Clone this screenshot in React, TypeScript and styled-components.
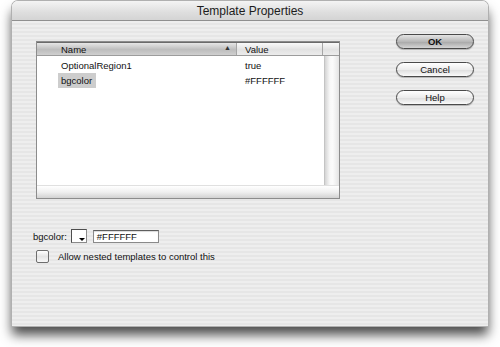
import React from 'react';
import styled, { createGlobalStyle } from 'styled-components';

const GlobalStyle = createGlobalStyle`
  html, body {
    margin: 0;
    padding: 0;
    background: #ffffff;
  }
  body {
    font-family: "Liberation Sans", Arial, sans-serif;
    color: #111;
  }
`;

function App() {
  return (
    <Page>
      <GlobalStyle />
      <Window>
        <TitleBar>Template Properties</TitleBar>
        <Content>
          <LeftColumn>
            <Table>
              <HeaderRow>
                <HeaderCell width={200} sorted indent={24}>
                  Name
                  <SortArrow>▲</SortArrow>
                </HeaderCell>
                <HeaderCell width={86} indent={8}>Value</HeaderCell>
                <HeaderCorner />
              </HeaderRow>
              <TableBody>
                <RowList>
                  <Row>
                    <Cell width={200} indent={24}>OptionalRegion1</Cell>
                    <Cell width={87} indent={8}>true</Cell>
                  </Row>
                  <Row>
                    <Cell width={200} indent={24}>
                      <Selected>bgcolor</Selected>
                    </Cell>
                    <Cell width={87} indent={8}>#FFFFFF</Cell>
                  </Row>
                </RowList>
                <VerticalTrack />
              </TableBody>
              <HorizontalTrack />
            </Table>

            <FieldRow>
              <FieldLabel>bgcolor:</FieldLabel>
              <Swatch>
                <SwatchArrow />
              </Swatch>
              <TextField>#FFFFFF</TextField>
            </FieldRow>

            <CheckRow>
              <CheckBox />
              <CheckLabel>Allow nested templates to control this</CheckLabel>
            </CheckRow>
          </LeftColumn>

          <ButtonColumn>
            <PillButton primary>OK</PillButton>
            <PillButton>Cancel</PillButton>
            <PillButton>Help</PillButton>
          </ButtonColumn>
        </Content>
      </Window>
    </Page>
  );
}

export default App;

const Page = styled.div`
  width: 500px;
  height: 347px;
  overflow: hidden;
  padding-top: 1px;
  box-sizing: border-box;
`;

const Window = styled.div`
  margin-left: 12px;
  width: 476px;
  height: 325px;
  border-radius: 6px 6px 0 0;
  background: repeating-linear-gradient(
    to bottom,
    #eeeeee 0px,
    #eeeeee 2px,
    #e6e6e6 2px,
    #e6e6e6 4px
  );
  box-shadow: 0 0 0 1px #b0b0b0, 0 9px 12px rgba(0, 0, 0, 0.7);
  display: flex;
  flex-direction: column;
`;

const TitleBar = styled.div`
  height: 18px;
  border-bottom: 1px solid #8f8f8f;
  border-radius: 6px 6px 0 0;
  background: linear-gradient(to bottom, #f4f4f4, #dedede 60%, #d4d4d4);
  display: flex;
  align-items: center;
  justify-content: center;
  font-size: 12px;
  color: #1c1c1c;
  padding-top: 1px;
`;

const Content = styled.div`
  display: flex;
  flex-direction: row;
`;

const LeftColumn = styled.div`
  padding: 20px 0 0 24px;
  display: flex;
  flex-direction: column;
`;

const Table = styled.div`
  width: 302px;
  height: 156px;
  border: 1px solid #8c8c8c;
  background: #ffffff;
  display: flex;
  flex-direction: column;
`;

const HeaderRow = styled.div`
  height: 12px;
  display: flex;
  border-bottom: 1px solid #9c9c9c;
  border-top: 1px solid #6a6a6a;
  font-size: 9.5px;
`;

const HeaderCell = styled.div<{ width: number; sorted?: boolean; indent: number }>`
  width: ${(p) => p.width}px;
  padding-left: ${(p) => p.indent}px;
  box-sizing: border-box;
  border-right: 1px solid #a6a6a6;
  display: flex;
  align-items: center;
  position: relative;
  color: #111;
  background: ${(p) =>
    p.sorted
      ? 'linear-gradient(to bottom, #e6e6e6, #bdbdbd 55%, #cfcfcf)'
      : 'linear-gradient(to bottom, #fafafa, #e2e2e2 55%, #ececec)'};
`;

const SortArrow = styled.span`
  position: absolute;
  right: 5px;
  top: 1px;
  font-size: 7px;
  color: #333;
`;

const HeaderCorner = styled.div`
  flex: 1;
  background: linear-gradient(to bottom, #fafafa, #e2e2e2 55%, #ececec);
`;

const TableBody = styled.div`
  height: 129px;
  display: flex;
`;

const RowList = styled.div`
  width: 287px;
  padding-top: 2px;
  display: flex;
  flex-direction: column;
`;

const Row = styled.div`
  height: 15px;
  display: flex;
  align-items: center;
  font-size: 9.5px;
`;

const Cell = styled.div<{ width: number; indent: number }>`
  width: ${(p) => p.width}px;
  padding-left: ${(p) => p.indent}px;
  box-sizing: border-box;
`;

const Selected = styled.span`
  background: #cdcdcd;
  padding: 2px 4px 2px 3px;
  margin-left: -3px;
`;

const VerticalTrack = styled.div`
  flex: 1;
  border-left: 1px solid #c4c4c4;
  background: linear-gradient(to right, #d4d4d4, #f8f8f8 35%, #fbfbfb 55%, #e4e4e4);
`;

const HorizontalTrack = styled.div`
  flex: 1;
  background: linear-gradient(to bottom, #ffffff, #f0f0f0 50%, #d2d2d2);
  border-top: 1px solid #e0e0e0;
`;

const FieldRow = styled.div`
  margin: 30px 0 0 -3px;
  display: flex;
  align-items: center;
  height: 14px;
`;

const FieldLabel = styled.span`
  font-size: 9.5px;
  margin-right: 4px;
`;

const Swatch = styled.div`
  width: 14px;
  height: 12px;
  border: 1px solid #4e4e4e;
  border-right-color: #8a8a8a;
  border-bottom-color: #8a8a8a;
  background: #ffffff;
  position: relative;
  margin-right: 6px;
`;

const SwatchArrow = styled.div`
  position: absolute;
  right: 1px;
  bottom: 1px;
  width: 0;
  height: 0;
  border-left: 3px solid transparent;
  border-right: 3px solid transparent;
  border-top: 3px solid #000;
`;

const TextField = styled.div`
  width: 61px;
  height: 11px;
  border: 1px solid #8a8a8a;
  border-top-color: #5e5e5e;
  background: #ffffff;
  font-size: 9.5px;
  line-height: 11px;
  padding-left: 3px;
  box-shadow: inset 0 1px 1px rgba(0, 0, 0, 0.15);
`;

const CheckRow = styled.div`
  margin-top: 7px;
  display: flex;
  align-items: center;
  height: 13px;
`;

const CheckBox = styled.div`
  width: 11px;
  height: 11px;
  border: 1px solid #6e6e6e;
  border-radius: 2px;
  background: linear-gradient(to bottom, #ffffff, #e4e4e4 50%, #f8f8f8);
  margin-right: 9px;
`;

const CheckLabel = styled.span`
  font-size: 9.5px;
`;

const ButtonColumn = styled.div`
  margin: 13px 0 0 56px;
  display: flex;
  flex-direction: column;
  gap: 13px;
`;

const PillButton = styled.div<{ primary?: boolean }>`
  width: 76px;
  height: 13px;
  border: 1px solid #4a4a4a;
  border-radius: 8px;
  display: flex;
  align-items: center;
  justify-content: center;
  font-size: 9.5px;
  font-weight: ${(p) => (p.primary ? 'bold' : 'normal')};
  color: #111;
  background: ${(p) =>
    p.primary
      ? 'linear-gradient(to bottom, #e4e4e4, #b8b8b8 50%, #a6a6a6 51%, #d4d4d4)'
      : 'linear-gradient(to bottom, #ffffff, #ececec 50%, #dcdcdc 51%, #fafafa)'};
  box-shadow: 0 1px 1px rgba(0, 0, 0, 0.25);
`;
